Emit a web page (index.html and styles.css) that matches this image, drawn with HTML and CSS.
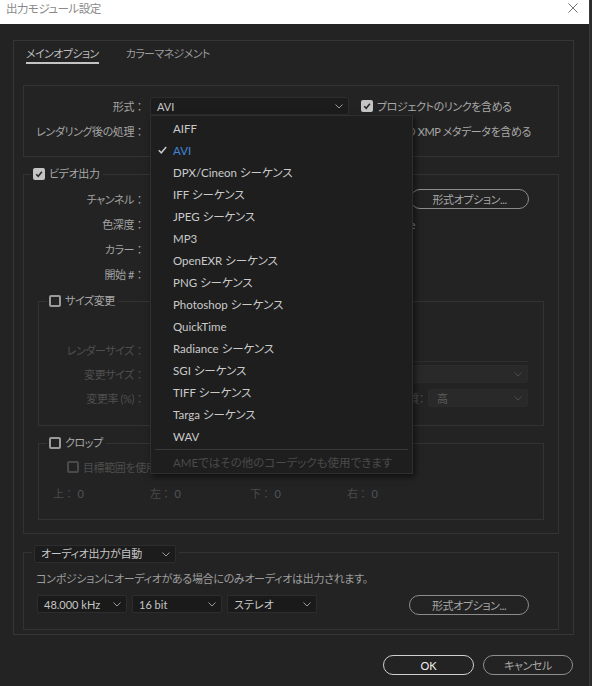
FILE: index.html
```html
<!DOCTYPE html>
<html lang="ja">
<head>
<meta charset="utf-8">
<title>出力モジュール設定</title>
<link rel="stylesheet" href="styles.css">
</head>
<body>
<div class="app">
  <div class="window">
    <div class="titlebar">
      <span class="title">出力モジュール設定</span>
      <svg class="close" width="10" height="10" viewBox="0 0 10 10"><path d="M0.5 0.5 9.5 9.5 M9.5 0.5 0.5 9.5"/></svg>
    </div>
    <div class="main">
      <div class="outer">
        <div class="tabs">
          <span class="tab active">メインオプション</span>
          <span class="tab">カラーマネジメント</span>
        </div>

        <div class="fmtbox">
          <div class="frow">
            <span class="lbl">形式<span class="c">：</span></span>
            <div class="sel s-format"><span>AVI</span><svg class="chev" width="8" height="5" viewBox="0 0 8 5"><path d="M0.5 0.5 4 4 7.5 0.5"/></svg></div>
            <span class="chk"><span class="cb on"><svg viewBox="0 0 8 8"><path d="M1.2 4.2 3.2 6.2 6.9 1.8"/></svg></span>プロジェクトのリンクを含める</span>
          </div>
          <div class="frow">
            <span class="lbl">レンダリング後の処理<span class="c">：</span></span>
            <div class="sel s-format"><span></span><svg class="chev" width="8" height="5" viewBox="0 0 8 5"><path d="M0.5 0.5 4 4 7.5 0.5"/></svg></div>
            <span class="chk"><span class="cb on"><svg viewBox="0 0 8 8"><path d="M1.2 4.2 3.2 6.2 6.9 1.8"/></svg></span>ソースの XMP メタデータを含める</span>
          </div>
        </div>

        <fieldset class="grp video">
          <legend><span class="cb on"><svg viewBox="0 0 8 8"><path d="M1.2 4.2 3.2 6.2 6.9 1.8"/></svg></span>ビデオ出力</legend>
          <div class="vgrid">
            <span class="lbl">チャンネル<span class="c">：</span></span>
            <div class="sel s-v"><span></span><svg class="chev" width="8" height="5" viewBox="0 0 8 5"><path d="M0.5 0.5 4 4 7.5 0.5"/></svg></div>
            <div class="btn">形式オプション...</div>

            <span class="lbl">色深度<span class="c">：</span></span>
            <div class="sel s-v"><span></span><svg class="chev" width="8" height="5" viewBox="0 0 8 5"><path d="M0.5 0.5 4 4 7.5 0.5"/></svg></div>
            <span class="info">None</span>

            <span class="lbl">カラー<span class="c">：</span></span>
            <div class="sel s-v"><span></span><svg class="chev" width="8" height="5" viewBox="0 0 8 5"><path d="M0.5 0.5 4 4 7.5 0.5"/></svg></div>
            <span></span>

            <span class="lbl">開始 #<span class="c">：</span></span>
            <span></span>
            <span></span>
          </div>

          <fieldset class="grp size">
            <legend><span class="cb"></span>サイズ変更</legend>
            <div class="sgrid">
              <span class="lbl dim">レンダーサイズ<span class="c">：</span></span>
              <div class="hline"></div>

              <span class="lbl dim">変更サイズ<span class="c">：</span></span>
              <div class="sel dis s-wide"><span></span><svg class="chev" width="8" height="5" viewBox="0 0 8 5"><path d="M0.5 0.5 4 4 7.5 0.5"/></svg></div>

              <span class="lbl dim">変更率 (%)<span class="c">：</span></span>
              <span class="lbl dim q">画質：</span>
              <div class="sel dis s-q"><span>高</span><svg class="chev" width="8" height="5" viewBox="0 0 8 5"><path d="M0.5 0.5 4 4 7.5 0.5"/></svg></div>
            </div>
          </fieldset>

          <fieldset class="grp crop">
            <legend><span class="cb"></span>クロップ</legend>
            <span class="chk dis target"><span class="cb"></span>目標範囲を使用</span>
            <div class="crow">
              <span><span class="dl">上<span class="c">：</span></span><span class="dv">0</span></span>
              <span><span class="dl">左<span class="c">：</span></span><span class="dv">0</span></span>
              <span><span class="dl">下<span class="c">：</span></span><span class="dv">0</span></span>
              <span><span class="dl">右<span class="c">：</span></span><span class="dv">0</span></span>
            </div>
          </fieldset>
        </fieldset>

        <fieldset class="grp audio">
          <legend><div class="sel s-audio"><span>オーディオ出力が自動</span><svg class="chev" width="8" height="5" viewBox="0 0 8 5"><path d="M0.5 0.5 4 4 7.5 0.5"/></svg></div></legend>
          <div class="ainner">
            <p class="note">コンポジションにオーディオがある場合にのみオーディオは出力されます。</p>
            <div class="arow">
              <div class="sel s-a"><span>48.000 kHz</span><svg class="chev" width="8" height="5" viewBox="0 0 8 5"><path d="M0.5 0.5 4 4 7.5 0.5"/></svg></div>
              <div class="sel s-a"><span>16 bit</span><svg class="chev" width="8" height="5" viewBox="0 0 8 5"><path d="M0.5 0.5 4 4 7.5 0.5"/></svg></div>
              <div class="sel s-a"><span>ステレオ</span><svg class="chev" width="8" height="5" viewBox="0 0 8 5"><path d="M0.5 0.5 4 4 7.5 0.5"/></svg></div>
              <div class="btn abtn">形式オプション...</div>
            </div>
          </div>
        </fieldset>
      </div>

      <div class="actions">
        <div class="pbtn ok">OK</div>
        <div class="pbtn cancel">キャンセル</div>
      </div>
    </div>

    <div class="menu">
      <div class="mi"><span class="ck"></span>AIFF</div>
      <div class="mi sel-item"><span class="ck"><svg width="9" height="8" viewBox="0 0 9 8"><path d="M0.8 4.2 3.3 6.8 8.2 1"/></svg></span>AVI</div>
      <div class="mi"><span class="ck"></span>DPX/Cineon シーケンス</div>
      <div class="mi"><span class="ck"></span>IFF シーケンス</div>
      <div class="mi"><span class="ck"></span>JPEG シーケンス</div>
      <div class="mi"><span class="ck"></span>MP3</div>
      <div class="mi"><span class="ck"></span>OpenEXR シーケンス</div>
      <div class="mi"><span class="ck"></span>PNG シーケンス</div>
      <div class="mi"><span class="ck"></span>Photoshop シーケンス</div>
      <div class="mi"><span class="ck"></span>QuickTime</div>
      <div class="mi"><span class="ck"></span>Radiance シーケンス</div>
      <div class="mi"><span class="ck"></span>SGI シーケンス</div>
      <div class="mi"><span class="ck"></span>TIFF シーケンス</div>
      <div class="mi"><span class="ck"></span>Targa シーケンス</div>
      <div class="mi"><span class="ck"></span>WAV</div>
      <div class="sep"></div>
      <div class="mi disabled"><span class="ck"></span>AMEではその他のコーデックも使用できます</div>
    </div>
  </div>
  <div class="edge"></div>
</div>
</body>
</html>
```

FILE: styles.css
```css
* { box-sizing: border-box; }

body {
  margin: 0;
  background: #232323;
  font-family: "Lato", "Noto Sans CJK JP", sans-serif;
  font-size: 11px;
  letter-spacing: -0.4px;
  color: #a3a3a3;
  font-feature-settings: "palt";
}

.c {
  font-feature-settings: normal;
  letter-spacing: 0;
}

.app {
  display: flex;
  width: 592px;
  height: 686px;
  overflow: hidden;
}

.window {
  position: relative;
  width: 589px;
  height: 686px;
  background: #232323;
}

.edge {
  width: 3px;
  background: #2b2b2b;
  border-left: 1px solid #3a3a3a;
}

/* title bar */
.titlebar {
  height: 24px;
  background: #ffffff;
  display: flex;
  justify-content: space-between;
  align-items: flex-start;
  padding: 2px 11px 0 6px;
}
.title {
  color: #8a8a8a;
  line-height: 14px;
  font-size: 11.5px;
  letter-spacing: -0.5px;
}
.close {
  margin-top: 1px;
}
.close path {
  stroke: #777;
  stroke-width: 1;
  fill: none;
}

.main {
  padding: 16px 0 0 13px;
}

.outer {
  width: 561px;
  height: 595px;
  border: 1px solid #363636;
}

/* tabs */
.tabs {
  display: flex;
  gap: 27px;
  margin: 5px 0 0 12px;
}
.tab {
  line-height: 16px;
  border-bottom: 2px solid transparent;
  color: #9c9c9c;
  letter-spacing: -0.6px;
}
.tab.active {
  border-bottom-color: #c4c4c4;
  color: #bdbdbd;
}

/* generic */
.lbl {
  text-align: right;
  white-space: nowrap;
  color: #a3a3a3;
}
.lbl.dim { color: #4f4f4f; }

.sel {
  display: flex;
  align-items: center;
  justify-content: space-between;
  height: 18px;
  padding: 0 5px 0 6px;
  background: #1c1c1c;
  border: 1px solid #2d2d2d;
  border-radius: 2px;
  color: #c6c6c6;
  white-space: nowrap;
  letter-spacing: 0;
}
.chev path {
  fill: none;
  stroke: #9a9a9a;
  stroke-width: 1;
}
.sel.dis {
  background: #292929;
  border-color: #2b2b2b;
  color: #5c5c5c;
}
.sel.dis .chev path { stroke: #4a4a4a; }

.chk {
  display: flex;
  align-items: center;
  gap: 4px;
  white-space: nowrap;
  color: #a8a8a8;
}
.chk.dis { color: #4d4d4d; }

.cb {
  width: 12px;
  height: 12px;
  border: 2px solid #9a9a9a;
  border-radius: 2px;
  flex: none;
  display: flex;
}
.cb.on {
  background: #c4c4c4;
  border-color: #c4c4c4;
}
.cb svg { width: 8px; height: 8px; }
.cb svg path {
  fill: none;
  stroke: #2a2a2a;
  stroke-width: 1.6;
}
.chk.dis .cb { border-color: #4a4a4a; }

.btn {
  height: 20px;
  border: 1px solid #8c8c8c;
  border-radius: 10px;
  display: flex;
  align-items: center;
  justify-content: center;
  color: #a8a8a8;
  white-space: nowrap;
}

/* format box */
.fmtbox {
  width: 536px;
  height: 72px;
  margin: 21px 0 0 9px;
  border: 1px solid #333;
  padding-top: 11px;
  display: flex;
  flex-direction: column;
  gap: 7px;
}
.frow {
  display: flex;
  align-items: center;
  height: 18px;
}
.frow .lbl {
  width: 121px;
  margin-right: 5px;
}
.s-format { width: 199px; }
.frow .chk { margin-left: 12px; }

/* fieldsets */
fieldset.grp {
  margin: 0;
  padding: 0;
  border: 1px solid #333;
  min-width: 0;
}
fieldset.grp > legend {
  padding: 0 3px 0 2px;
  display: flex;
  align-items: center;
  gap: 4px;
  height: 14px;
  line-height: 14px;
  white-space: nowrap;
  color: #a8a8a8;
}

fieldset.grp.video {
  width: 536px;
  height: 367px;
  margin: 10px 0 0 9px;
  padding: 9px 0 0 7px;
}
.vgrid {
  display: grid;
  grid-template-columns: 114px 255px 119px;
  column-gap: 5px;
  row-gap: 7px;
  grid-auto-rows: 18px;
  align-items: center;
}
.s-v { width: 160px; }
.info {
  margin-left: -21px;
  color: #a3a3a3;
  letter-spacing: 0;
}

fieldset.grp.size {
  width: 506px;
  height: 132px;
  margin: 11px 0 0 7px;
  padding: 33px 14px 0 8px;
}
.sgrid {
  display: grid;
  grid-template-columns: 98px 5px 245px 33px 100px;
  grid-auto-rows: 18px;
  row-gap: 6px;
  align-items: center;
}
.sgrid .lbl { grid-column: 1; }
.hline {
  grid-column: 3 / 6;
  align-self: start;
  height: 21px;
  border-bottom: 1px solid #2e2e2e;
}
.s-wide { grid-column: 3 / 6; }
.sgrid .lbl.q {
  grid-column: 4;
  justify-self: end;
  margin-right: 4px;
}
.s-q {
  grid-column: 5;
  padding-left: 8px;
}

fieldset.grp.crop {
  width: 506px;
  height: 84px;
  margin: 10px 0 0 7px;
  padding: 10px 14px 0 8px;
}
.target {
  margin-left: 20px;
  height: 14px;
}
.crow {
  display: grid;
  grid-template-columns: 97px 100px 97px auto;
  margin: 13px 0 0 6px;
  height: 14px;
  line-height: 14px;
}
.dl { color: #4b4b4b; }
.dv { color: #4d535c; margin-left: 3px; }

fieldset.grp.audio {
  width: 536px;
  height: 85px;
  margin: 11px 0 0 9px;
  padding: 12px 0 0 8px;
}
fieldset.grp.audio > legend { align-items: flex-start; }
.s-audio {
  width: 142px;
  flex: none;
  padding-left: 6px;
  letter-spacing: -0.3px;
}
.ainner { padding-left: 4px; }
.note {
  margin: 0;
  line-height: 16px;
  color: #9e9e9e;
  white-space: nowrap;
  letter-spacing: -0.3px;
}
.arow {
  display: flex;
  gap: 5px;
  margin: 8px 0 0 1px;
  align-items: flex-start;
}
.s-a {
  width: 90px;
  background: #1a1a1a;
}
.abtn {
  width: 120px;
  margin-left: 87px;
}

/* action buttons */
.actions {
  display: flex;
  gap: 9px;
  margin: 20px 0 0 370px;
}
.pbtn {
  height: 20px;
  width: 90px;
  border-radius: 10px;
  display: flex;
  align-items: center;
  justify-content: center;
}
.pbtn.ok {
  width: 91px;
  border: 1px solid #cfcfcf;
  color: #f0f0f0;
  letter-spacing: 0;
}
.pbtn.cancel {
  border: 1px solid #8e8e8e;
  color: #a8a8a8;
}

/* dropdown menu */
.menu {
  position: absolute;
  left: 150px;
  top: 115px;
  width: 263px;
  height: 359px;
  background: #1e1e1e;
  border: 1px solid #2f2f2f;
  box-shadow: 2px 3px 6px rgba(0, 0, 0, 0.55);
  padding-top: 1px;
  font-size: 11.5px;
  letter-spacing: 0;
}
.mi {
  display: flex;
  align-items: center;
  height: 22px;
  color: #cacaca;
  white-space: nowrap;
}
.ck {
  width: 22px;
  flex: none;
  display: flex;
  padding-left: 7px;
}
.ck path {
  fill: none;
  stroke: #c8c8c8;
  stroke-width: 1.5;
}
.mi.sel-item { color: #3f86d8; }
.mi.disabled {
  color: #4a4a4a;
  margin-top: 1px;
}
.sep {
  height: 1px;
  background: #383838;
  margin: 2px 4px 0 4px;
}
```
